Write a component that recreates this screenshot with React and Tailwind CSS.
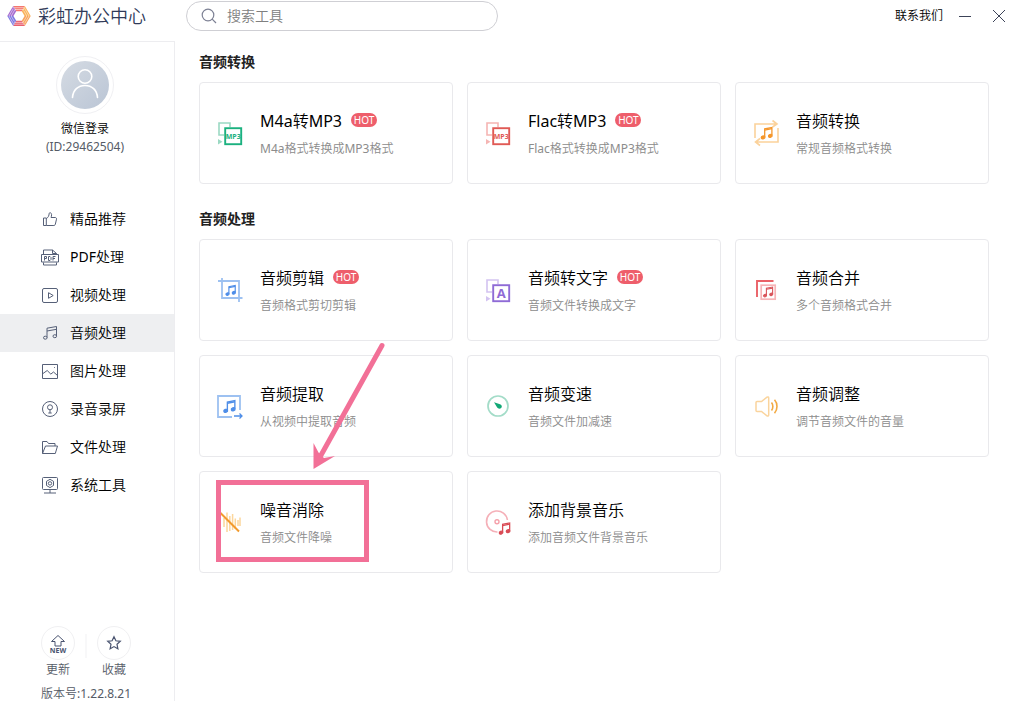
import { useState } from 'react';
import clsx from 'clsx';

// Beamed pair of notes, drawn in a 12 x 13 box and scaled into place
function Note({ x, y, scale = 1, color }) {
  return (
    <g transform={`translate(${x} ${y}) scale(${scale})`} fill="none" stroke={color} strokeWidth="1.3">
      <path d="M4.2 10.6V2.4L11.4 1v8" />
      <path d="M4.2 3.6l7.2-1.4" />
      <ellipse cx="2.6" cy="10.9" rx="1.8" ry="1.4" fill={color} transform="rotate(-20 2.6 10.9)" />
      <ellipse cx="9.8" cy="9.4" rx="1.8" ry="1.4" fill={color} transform="rotate(-20 9.8 9.4)" />
    </g>
  );
}

function ToolSvg({ children }) {
  return (
    <svg width="28" height="28" viewBox="0 0 28 28" fill="none" className="shrink-0" aria-hidden="true">
      {children}
    </svg>
  );
}

function ConvertIcon({ light, dark, label }) {
  const big = label.length === 1;
  return (
    <ToolSvg>
      <path d="M8 16H3V4h11v4" stroke={light} strokeWidth="1.6" />
      <path d="M2 20l4.5 2.7L2 25.4z" fill={light} />
      <rect x="9.2" y="9.2" width="16" height="16" fill="#fff" stroke={dark} strokeWidth="1.9" />
      <text
        x="17.2"
        y={big ? 22 : 20}
        textAnchor="middle"
        fill={dark}
        fontSize={big ? 13 : 7}
        fontWeight="700"
        fontFamily="Open Sans, Noto Sans, sans-serif"
      >
        {label}
      </text>
    </ToolSvg>
  );
}

const FormatIcon = () => (
  <ToolSvg>
    <g stroke="#fbd29b" strokeWidth="1.6">
      <path d="M3 19V5h22M20.5 1.5L25 5l-4.5 3" />
      <path d="M26 9v14H3.5M8 19.5L3.5 23 8 26.5" />
    </g>
    <Note x={8.5} y={7.5} color="#f5972c" />
  </ToolSvg>
);

const TrimIcon = () => (
  <ToolSvg>
    <path d="M6 2v20h20.5M2 5h21v21" stroke="#9dc1f1" strokeWidth="1.8" />
    <Note x={9.2} y={8.5} scale={0.88} color="#4f8ee8" />
  </ToolSvg>
);

const ExtractIcon = () => (
  <ToolSvg>
    <path d="M16 25H2V4h22v14" stroke="#9dc1f1" strokeWidth="1.8" />
    <path d="M18 24h8M23.5 21.5L26 24l-2.5 2.5" stroke="#4f8ee8" strokeWidth="1.3" />
    <Note x={7} y={7.5} scale={1.04} color="#4f8ee8" />
  </ToolSvg>
);

const SpeedIcon = () => (
  <ToolSvg>
    <circle cx="14" cy="14" r="10" stroke="#a3dcc8" strokeWidth="1.7" />
    <path d="M10 10.3l6 2c2.2.8 2.4 3 .9 4-1.4.9-3.2.3-3.9-1z" fill="#12a876" />
  </ToolSvg>
);

const MergeIcon = () => (
  <ToolSvg>
    <path d="M5 21V5h16.5" stroke="#ea6167" strokeWidth="1.9" />
    <rect x="9.2" y="9.2" width="14" height="14" stroke="#f7b4b7" strokeWidth="1.7" />
    <Note x={10.8} y={10.2} scale={0.86} color="#d9565c" />
  </ToolSvg>
);

const VolumeIcon = () => (
  <ToolSvg>
    <path
      d="M4 10.5c0-.6.4-1 1-1h4.5L15 5.2c.8-.6 1.7-.2 1.7.7v17.2c0 .9-.9 1.3-1.7.7l-5.5-4.3H5c-.6 0-1-.4-1-1z"
      stroke="#fad49d"
      strokeWidth="1.5"
    />
    <path d="M19.5 10.5c1.8 2.2 1.8 5.8 0 8M22.5 7.8c3.3 3.6 3.3 9.8 0 13.4" stroke="#f2a941" strokeWidth="1.6" />
  </ToolSvg>
);

const DenoiseIcon = () => (
  <ToolSvg>
    <path d="M8 10v9M11 4.5V24M13.8 8v15M16.6 6v16M19.3 10.5V21M22 12v6M24 9.5V18" stroke="#fcd69c" strokeWidth="1.5" />
    <path d="M4 4.5l19 19" stroke="#f29a2c" strokeWidth="1.9" />
  </ToolSvg>
);

const DiscIcon = () => (
  <ToolSvg>
    <path d="M13.5 24A10.5 10.5 0 1 1 23.4 12" stroke="#f5b0b8" strokeWidth="1.6" />
    <circle cx="13" cy="13.7" r="2" stroke="#f5a0aa" strokeWidth="1.4" />
    <Note x={14.5} y={14} scale={0.98} color="#d94b55" />
  </ToolSvg>
);

const SECTIONS = [
  {
    title: '音频转换',
    tools: [
      { name: 'M4a转MP3', desc: 'M4a格式转换成MP3格式', hot: true, icon: <ConvertIcon light="#9bd9c3" dark="#1bb17f" label="MP3" /> },
      { name: 'Flac转MP3', desc: 'Flac格式转换成MP3格式', hot: true, icon: <ConvertIcon light="#f5b5b3" dark="#e05a55" label="MP3" /> },
      { name: '音频转换', desc: '常规音频格式转换', icon: <FormatIcon /> },
    ],
  },
  {
    title: '音频处理',
    tools: [
      { name: '音频剪辑', desc: '音频格式剪切剪辑', hot: true, icon: <TrimIcon /> },
      { name: '音频转文字', desc: '音频文件转换成文字', hot: true, icon: <ConvertIcon light="#d3c3f1" dark="#8f6bd6" label="A" /> },
      { name: '音频合并', desc: '多个音频格式合并', icon: <MergeIcon /> },
      { name: '音频提取', desc: '从视频中提取音频', icon: <ExtractIcon /> },
      { name: '音频变速', desc: '音频文件加减速', icon: <SpeedIcon /> },
      { name: '音频调整', desc: '调节音频文件的音量', icon: <VolumeIcon /> },
      { name: '噪音消除', desc: '音频文件降噪', icon: <DenoiseIcon />, marked: true },
      { name: '添加背景音乐', desc: '添加音频文件背景音乐', icon: <DiscIcon /> },
    ],
  },
];

const NAV = [
  {
    label: '精品推荐',
    icon: <path d="M3.5 9h2.8v7.5H3.5zM6.3 9.5c2-1 2.7-2.7 2.9-5.2.1-.9 2.4-.9 2.4 1.4 0 1-.3 2-.6 2.8h4.2c1 0 1.5.8 1.3 1.7l-1.2 5.2c-.2.7-.7 1.1-1.4 1.1H6.3" />,
  },
  {
    label: 'PDF处理',
    icon: (
      <>
        <path d="M3.5 7V3h9l4 3.5V7M12.5 3v3.5h4M3.5 15.5V18h13v-2.5M1.5 7.5h17V15h-17z" />
        <path d="M4.5 13.5v-4h2v2h-2M8.5 9.5H10l1 1v2l-1 1H8.5zM13 13.5v-4h2.5M13 11.5h2" />
      </>
    ),
  },
  {
    label: '视频处理',
    icon: (
      <>
        <rect x="2.5" y="3.5" width="15" height="14" rx="1.5" />
        <path d="M8.5 7.7v5.6l4.7-2.8z" />
      </>
    ),
  },
  {
    label: '音频处理',
    icon: (
      <>
        <path d="M7 14.5V5.2l9.5-1.7V13M7 8l9.5-1.7" />
        <ellipse cx="5.3" cy="14.7" rx="1.8" ry="1.5" />
        <ellipse cx="14.8" cy="13.2" rx="1.8" ry="1.5" />
      </>
    ),
  },
  {
    label: '图片处理',
    icon: (
      <>
        <rect x="2.5" y="3.5" width="15" height="14" />
        <path d="M3 12.5l4.2-3 3.6 3.6 2.7-2.1 4 3.5M14 6.5h.8" />
      </>
    ),
  },
  {
    label: '录音录屏',
    icon: (
      <>
        <circle cx="10" cy="10" r="7.5" />
        <circle cx="10" cy="8.3" r="2.5" />
        <path d="M10 10.8V14M8.3 14h3.4" />
      </>
    ),
  },
  {
    label: '文件处理',
    icon: <path d="M2.5 16.5v-12H7l1.5 2H15V9M2.5 16.5l3-7.5h12l-2.2 7.5z" />,
  },
  {
    label: '系统工具',
    icon: (
      <>
        <rect x="2.5" y="2.5" width="15" height="12" rx="1" />
        <path d="M10 14.5V18M4 18h12M10 4.3l3.5 2v4.2L10 12.6l-3.5-2.1V6.3z" />
        <circle cx="10" cy="8.4" r="1.7" />
      </>
    ),
  },
];

function Logo() {
  return (
    <svg width="24" height="24" viewBox="0 0 24 24" fill="none" className="shrink-0" aria-hidden="true">
      <path d="M6.2 1.9h11.6l-3 5.3H9.2z" fill="#f4776f" />
      <path d="M17.8 1.9L23.7 12h-6.1l-2.8-4.8z" fill="#f9b25a" />
      <path d="M23.7 12l-5.9 10.1-3-5.3 2.8-4.8z" fill="#f7a35c" />
      <path d="M17.8 22.1H6.2l3-5.3h5.6z" fill="#e9606f" />
      <path d="M6.2 22.1L.3 12h6.1l2.8 4.8z" fill="#7f78e2" />
      <path d="M.3 12L6.2 1.9l3 5.3L6.4 12z" fill="#a56bd0" />
      <g stroke="#fff" strokeWidth=".5">
        <path d="M5.5 3.7h11M8 5.5h9M7 18.4h9M7.5 20.2h11" />
        <path d="M2 12l4.2-7.2M4.2 12l4.2-7.2M2 12l5.2 9M4.2 12l3.2 5.5" />
        <path d="M22 12l-5.2-9M19.8 12l-3.2-5.5M22 12l-4.2 7.2M19.8 12l-4.2 7.2" />
      </g>
    </svg>
  );
}

function ToolCard({ tool }) {
  return (
    <div className="relative">
      <button type="button" className="flex h-[102px] w-full items-center gap-4 rounded border border-[#e9e9ec] bg-white pl-4 text-left">
        {tool.icon}
        <span className="flex flex-col gap-1.5 pt-0.5">
          <span className="flex items-start gap-[9px] text-base leading-6 text-black">
            {tool.name}
            {tool.hot && (
              <span className="mt-1 flex h-3.5 w-[26px] items-center justify-center rounded-full bg-[#ee5e6b] text-[10px] leading-3 text-white">
                HOT
              </span>
            )}
          </span>
          <span className="text-xs leading-5 text-[#8c8c8c]">{tool.desc}</span>
        </span>
      </button>
      {tool.marked && <Marker />}
    </div>
  );
}

// Callout frame and arrow that sit on top of the cards
function Marker() {
  return (
    <>
      <div className="pointer-events-none absolute top-[9px] left-[17px] h-[82px] w-[153px] border-5 border-[#f27097]" />
      <svg
        className="pointer-events-none absolute -top-[129px] left-[113px]"
        width="74"
        height="130"
        viewBox="0 0 74 130"
        aria-hidden="true"
      >
        <path d="M70 3.5L8 115" stroke="#f27097" strokeWidth="5" strokeLinecap="round" />
        <path d="M1.5 101l5 9.5L12 116l11-2L1.5 127z" fill="#f27097" />
      </svg>
    </>
  );
}

function Sidebar({ active, onSelect }) {
  return (
    <aside className="flex flex-1 flex-col border-t border-r border-[#ededf0]">
      <div className="flex flex-col items-center pt-3.5 pr-1">
        <div className="flex size-[58px] items-center justify-center rounded-full border border-[#f0f0f3]">
          <svg width="48" height="48" viewBox="0 0 48 48" fill="none" aria-hidden="true">
            <defs>
              <linearGradient id="avatar" x1="0" y1="0" x2="1" y2="1">
                <stop offset="0" stopColor="#d5dbe3" />
                <stop offset="1" stopColor="#bac5d5" />
              </linearGradient>
            </defs>
            <circle cx="24" cy="24" r="24" fill="url(#avatar)" />
            <g stroke="#fff" strokeWidth="1.6" strokeLinecap="round">
              <circle cx="24" cy="15.5" r="6.8" />
              <path d="M11.5 36.5c.6-7.5 5.5-12 12.5-12s11.9 4.5 12.5 12" />
            </g>
          </svg>
        </div>
        <button type="button" className="mt-1.5 text-xs leading-[18px] text-black">微信登录</button>
        <span className="text-xs leading-[18px] text-[#555b66]">(ID:29462504)</span>
      </div>

      <nav className="mt-11 flex flex-col">
        {NAV.map(item => (
          <button
            key={item.label}
            type="button"
            onClick={() => onSelect(item.label)}
            className={clsx('flex h-[38px] items-center gap-2.5 pl-10 text-sm text-black', active === item.label && 'bg-[#eeeff1]')}
          >
            <svg width="20" height="20" viewBox="0 0 20 20" fill="none" stroke="#566078" strokeLinejoin="round" aria-hidden="true">
              {item.icon}
            </svg>
            {item.label}
          </button>
        ))}
      </nav>

      <div className="mt-auto flex flex-col items-center pr-0.5">
        <div className="flex items-start gap-2.5 text-xs leading-[18px] text-[#555b66]">
          <button type="button" className="flex flex-col items-center gap-px">
            <span className="flex size-[34px] items-center justify-center rounded-full border border-[#f0f0f2]">
              <svg width="20" height="20" viewBox="0 0 20 20" fill="none" stroke="#4a5470" aria-hidden="true">
                <path d="M10 2.5l6.5 6H13V13H7V8.5H3.5z" />
                <text x="10" y="19.5" textAnchor="middle" fill="#4a5470" stroke="none" fontSize="7" fontWeight="700">
                  NEW
                </text>
              </svg>
            </span>
            <span>更新</span>
          </button>
          <span className="mt-2 h-6 w-0.5 bg-[#f8f8f9]" />
          <button type="button" className="flex flex-col items-center gap-px">
            <span className="flex size-[34px] items-center justify-center rounded-full border border-[#f0f0f2]">
              <svg width="20" height="20" viewBox="0 0 20 20" fill="none" stroke="#4a5470" strokeWidth="1.2" aria-hidden="true">
                <path d="M10 3.7l1.9 4.1 4.4.5-3.3 3 .9 4.5-3.9-2.2-3.9 2.2.9-4.5-3.3-3 4.4-.5z" />
              </svg>
            </span>
            <span>收藏</span>
          </button>
        </div>
        <span className="mt-2 text-xs leading-[14px] text-[#555b66]">版本号:1.22.8.21</span>
      </div>
    </aside>
  );
}

export default function App() {
  const [active, setActive] = useState('音频处理');
  const [query, setQuery] = useState('');

  return (
    <div className="flex min-h-screen bg-white font-['Noto_Sans','Noto_Sans_CJK_SC_DemiLight','Noto_Sans_CJK_SC',sans-serif]">
      <div className="flex w-[175px] shrink-0 flex-col">
        <div className="mb-[9px] flex h-8 items-center gap-[7px] pl-[7px]">
          <Logo />
          <span className="text-lg leading-6 whitespace-nowrap text-[#2f3a58]">彩虹办公中心</span>
        </div>
        <Sidebar active={active} onSelect={setActive} />
      </div>

      <div className="flex min-w-0 flex-1 flex-col">
        <header className="flex h-8 items-center pr-3 pl-[11px]">
          <label className="flex h-[30px] w-[312px] items-center gap-2.5 rounded-full border border-[#cfcfd4] px-3.5">
            <svg width="16" height="16" viewBox="0 0 16 16" fill="none" stroke="#7d8194" strokeWidth="1.2" aria-hidden="true">
              <circle cx="7" cy="7" r="5.8" />
              <path d="M11.2 11.2L15 15" />
            </svg>
            <input
              type="text"
              value={query}
              onChange={e => setQuery(e.target.value)}
              placeholder="搜索工具"
              aria-label="搜索工具"
              className="min-w-0 flex-1 text-sm outline-none placeholder:text-[#808080]"
            />
          </label>
          <button type="button" className="mr-4 ml-auto text-xs leading-[18px] text-black">联系我们</button>
          <button type="button" aria-label="最小化" className="mr-[22px]">
            <svg width="12" height="12" viewBox="0 0 12 12" stroke="#3c4358">
              <path d="M0 6.5h12" />
            </svg>
          </button>
          <button type="button" aria-label="关闭">
            <svg width="12" height="12" viewBox="0 0 12 12" stroke="#3c4358">
              <path d="M0 0l12 12M12 0L0 12" />
            </svg>
          </button>
        </header>

        <main className="flex flex-col gap-[25px] pt-5 pr-7 pb-7 pl-6">
          {SECTIONS.map(section => (
            <section key={section.title}>
              <h2 className="mb-2.5 font-['Noto_Sans','Noto_Sans_CJK_SC',sans-serif] text-sm leading-5 font-bold text-[#222]">
                {section.title}
              </h2>
              <div className="grid grid-cols-3 gap-[14px]">
                {section.tools.map(tool => (
                  <ToolCard key={tool.name} tool={tool} />
                ))}
              </div>
            </section>
          ))}
        </main>
      </div>
    </div>
  );
}
